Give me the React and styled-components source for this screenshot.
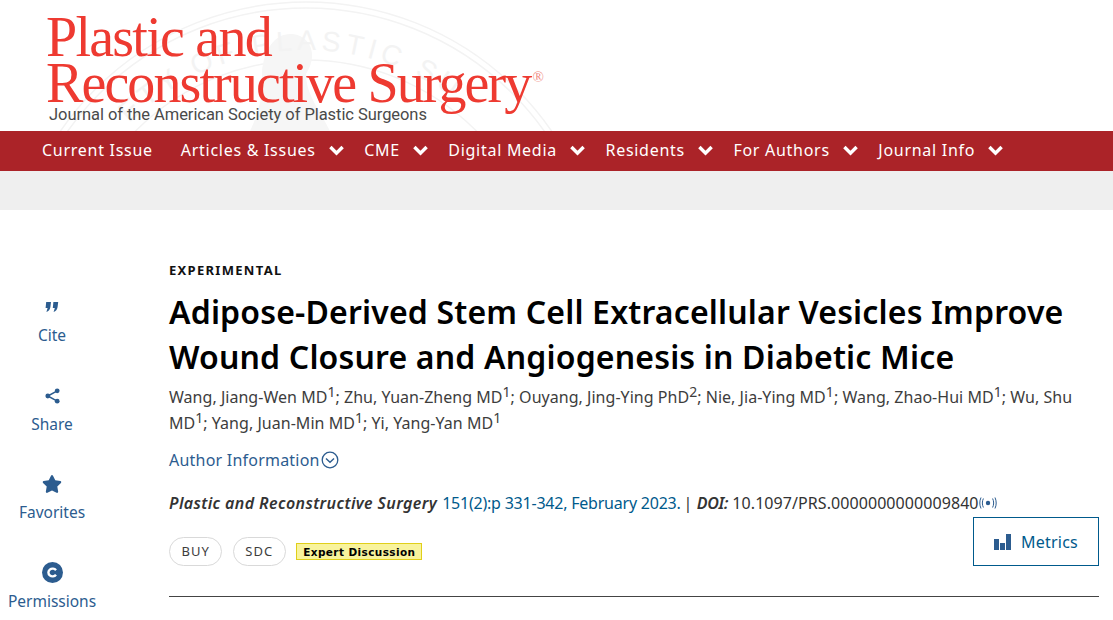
import React from "react";
import styled, { createGlobalStyle } from "styled-components";
import { FaStar } from "react-icons/fa";

const GlobalStyle = createGlobalStyle`
  html, body { margin: 0; padding: 0; background: #fff; }
  body { font-family: "Noto Sans", "Open Sans", sans-serif; color: #3d3d3d; overflow: hidden; }
  sup { font-size: 14px; line-height: 0; vertical-align: 6px; }
`;

const Page = styled.div`
  width: 1113px;
  height: 620px;
  overflow: hidden;
`;

const Header = styled.header`
  position: relative;
  height: 131px;
  padding: 14px 0 0 46px;
  box-sizing: border-box;
  overflow: hidden;
`;

const Seal = styled.svg`
  position: absolute;
  left: 0;
  top: 0;
`;

const Logo = styled.div`
  position: relative;
  font-family: "Liberation Serif", serif;
  color: #ee3a31;
`;

const LogoLine = styled.div`
  font-size: 56px;
  letter-spacing: ${({ $spacing }) => $spacing}px;
  line-height: 46px;
  white-space: nowrap;
`;

const Registered = styled.span`
  font-size: 15px;
  margin-left: 2px;
  letter-spacing: 0;
  vertical-align: 20px;
  line-height: 0;
  color: #f08a80;
`;

const Tagline = styled.div`
  font-family: "Roboto", sans-serif;
  font-size: 16.5px;
  line-height: 20px;
  color: #4a4a4a;
  margin: -1px 0 0 3px;
  letter-spacing: -0.06px;
  white-space: nowrap;
`;

const Nav = styled.nav`
  height: 40px;
  background: #ab2328;
  display: flex;
  align-items: center;
  padding: 0 0 2px 42px;
  box-sizing: border-box;
`;

const NavItem = styled.a`
  display: flex;
  align-items: center;
  gap: 13px;
  margin-right: ${({ $plain }) => ($plain ? 28 : 20.5)}px;
  color: #fff;
  font-family: "Noto Sans", sans-serif;
  font-size: 16px;
  letter-spacing: 0.72px;
  white-space: nowrap;
`;

const Band = styled.div`
  height: 39px;
  background: #efefef;
`;

const Content = styled.div`
  display: flex;
  padding-top: 51px;
`;

const Sidebar = styled.aside`
  width: 104px;
  margin-right: 65px;
  padding-top: 35px;
  display: flex;
  flex-direction: column;
  align-items: center;
  gap: 38.6px;
`;

const Action = styled.a`
  display: flex;
  flex-direction: column;
  align-items: center;
  gap: 7px;
  color: #2c5c8f;
  font-size: 15.5px;
  line-height: 21px;
`;

const ActionIcon = styled.span`
  height: 22px;
  display: flex;
  align-items: center;
  justify-content: center;
`;

const Main = styled.main`
  width: 930px;
`;

const Category = styled.div`
  font-size: 13px;
  font-weight: 700;
  line-height: 18px;
  letter-spacing: 1.3px;
  color: #111;
`;

const Title = styled.h1`
  margin: 10px 0 0;
  font-size: 32px;
  line-height: 45px;
  font-weight: 600;
  letter-spacing: 0.17px;
  color: #000;
  white-space: nowrap;
`;

const Authors = styled.p`
  margin: 5px 0 0;
  font-size: 16px;
  line-height: 26px;
  letter-spacing: 0.03px;
  color: #3d3d3d;
`;

const AuthorInfo = styled.a`
  display: flex;
  align-items: center;
  margin-top: 12px;
  gap: 1px;
  color: #2c5c8f;
  font-size: 16px;
  line-height: 24px;
  letter-spacing: 0.22px;
`;

const Citation = styled.div`
  display: flex;
  align-items: center;
  margin-top: 19px;
  font-size: 16px;
  line-height: 24px;
  white-space: nowrap;
`;

const Journal = styled.em`
  font-weight: 600;
  color: #333;
  letter-spacing: 0.38px;
`;

const Volume = styled.span`
  margin-left: 5px;
  color: #005a8c;
  letter-spacing: -0.22px;
`;

const Doi = styled.span`
  margin-left: 3px;
  color: #333;
  letter-spacing: 0.07px;
`;

const DoiLabel = styled.em`
  font-weight: 600;
  letter-spacing: -0.3px;
`;

const ActionRow = styled.div`
  display: flex;
  justify-content: space-between;
  align-items: flex-start;
  margin-top: 2px;
`;

const Tags = styled.div`
  display: flex;
  align-items: center;
  gap: 10.5px;
  margin-top: 20px;
`;

const Pill = styled.a`
  height: 29px;
  box-sizing: border-box;
  padding: 0 11.5px 1px;
  border: 1px solid #d9d9d9;
  border-radius: 15px;
  display: flex;
  align-items: center;
  font-size: 13px;
  letter-spacing: 1px;
  color: #3d3d3d;
`;

const ExpertBadge = styled.span`
  height: 17px;
  box-sizing: border-box;
  padding: 0 6px;
  background: #f8f39c;
  border: 1px solid #e0cf1a;
  display: flex;
  align-items: center;
  font-family: "DejaVu Sans", sans-serif;
  font-size: 10.5px;
  font-weight: 700;
  letter-spacing: 0.4px;
  color: #000;
`;

const MetricsButton = styled.a`
  width: 126px;
  height: 49px;
  box-sizing: border-box;
  border: 1px solid #005a8c;
  display: flex;
  align-items: center;
  justify-content: center;
  gap: 10px;
  color: #005a8c;
  font-size: 16px;
  letter-spacing: 0.2px;
`;

const Rule = styled.hr`
  margin: 30px 0 0;
  border: 0;
  border-top: 1px solid #444;
`;

const navItems = [
  { label: "Current Issue", plain: true },
  { label: "Articles & Issues" },
  { label: "CME" },
  { label: "Digital Media" },
  { label: "Residents" },
  { label: "For Authors" },
  { label: "Journal Info" },
];

const authors = [
  ["Wang, Jiang-Wen MD", 1],
  ["Zhu, Yuan-Zheng MD", 1],
  ["Ouyang, Jing-Ying PhD", 2],
  ["Nie, Jia-Ying MD", 1],
  ["Wang, Zhao-Hui MD", 1],
  ["Wu, Shu MD", 1],
  ["Yang, Juan-Min MD", 1],
  ["Yi, Yang-Yan MD", 1],
];

const SealMark = () => (
  <Seal width="620" height="131" viewBox="0 0 620 131" fill="none" stroke="#f3f3f3" strokeWidth="1.5">
    <circle cx="306" cy="300" r="298" />
    <circle cx="306" cy="300" r="292" />
    <circle cx="306" cy="300" r="240" />
    <path d="M250 131 C262 105 262 95 262 72 C264 45 280 28 300 36 C316 44 314 62 306 74 C306 95 320 110 330 131 Z" fill="#f6f6f6" stroke="none" />
    <path id="sealArc" d="M56 300 A250 250 0 0 1 556 300" stroke="none" />
    <text fontFamily="Liberation Sans, sans-serif" fontSize="28" fill="#f3f3f3" stroke="none" letterSpacing="5">
      <textPath href="#sealArc" startOffset="25%">ETY OF PLASTIC SU</textPath>
    </text>
  </Seal>
);

const NavChevron = () => (
  <svg width="15" height="11" viewBox="0 0 15 11" fill="none" stroke="#fff" strokeWidth="3.4">
    <path d="M1.4 2 L7.5 8.2 L13.6 2" />
  </svg>
);

const QuoteIcon = () => (
  <svg width="14" height="12" viewBox="0 0 14 12" fill="#2c5c8f">
    <path d="M1.2 1 H6 L5.4 6 C5 8.6 3.6 10.4 1.4 11 L2.6 7 H.6 Z" />
    <path d="M8.4 1 H13.2 L12.6 6 C12.2 8.6 10.8 10.4 8.6 11 L9.8 7 H7.8 Z" />
  </svg>
);

const ShareIcon = () => (
  <svg width="15" height="16" viewBox="0 0 15 16" fill="#2c5c8f" stroke="#2c5c8f">
    <circle cx="12.2" cy="2.8" r="2.4" stroke="none" />
    <circle cx="2.8" cy="8" r="2.4" stroke="none" />
    <circle cx="12.2" cy="13.2" r="2.4" stroke="none" />
    <path d="M12.2 2.8 L2.8 8 L12.2 13.2" fill="none" strokeWidth="1.5" />
  </svg>
);

const CopyrightIcon = () => (
  <svg width="21" height="21" viewBox="0 0 21 21">
    <circle cx="10.5" cy="10.5" r="10.5" fill="#2c5c8f" />
    <path d="M14 8.2 A4.2 3.9 0 1 0 14 12.8" fill="none" stroke="#fff" strokeWidth="2.4" />
  </svg>
);

const CircleChevron = () => (
  <svg width="18" height="18" viewBox="0 0 18 18" fill="none" stroke="#2c5c8f">
    <circle cx="9" cy="9" r="7.8" strokeWidth="1.3" />
    <path d="M5 7.5 L9 11.3 L13 7.5" strokeWidth="1.4" />
  </svg>
);

const SignalIcon = () => (
  <svg width="18" height="14" viewBox="0 0 18 14" fill="none" stroke="#2c5c8f" strokeWidth="1">
    <circle cx="9" cy="7" r="2.2" fill="#2c5c8f" stroke="none" />
    <path d="M4.4 2.5 C3 5.2 3 8.8 4.4 11.5 M2 1.5 C.4 5 .4 9 2 12.5 M13.6 2.5 C15 5.2 15 8.8 13.6 11.5 M16 1.5 C17.6 5 17.6 9 16 12.5" />
  </svg>
);

const BarsIcon = () => (
  <svg width="17" height="16" viewBox="0 0 17 16" fill="#2c5c8f">
    <rect x="0" y="5" width="5" height="11" />
    <rect x="6" y="9" width="5" height="7" />
    <rect x="12" y="0" width="5" height="16" />
  </svg>
);

const App = () => (
  <Page>
    <GlobalStyle />
    <Header>
      <SealMark />
      <Logo>
        <LogoLine $spacing={-1.75}>Plastic and</LogoLine>
        <LogoLine $spacing={-1.9}>
          Reconstructive Surgery<Registered>®</Registered>
        </LogoLine>
        <Tagline>Journal of the American Society of Plastic Surgeons</Tagline>
      </Logo>
    </Header>
    <Nav>
      {navItems.map((item) => (
        <NavItem key={item.label} $plain={item.plain}>
          {item.label}
          {!item.plain && <NavChevron />}
        </NavItem>
      ))}
    </Nav>
    <Band />
    <Content>
      <Sidebar>
        <Action>
          <ActionIcon><QuoteIcon /></ActionIcon>
          Cite
        </Action>
        <Action>
          <ActionIcon><ShareIcon /></ActionIcon>
          Share
        </Action>
        <Action>
          <ActionIcon><FaStar size={20} /></ActionIcon>
          Favorites
        </Action>
        <Action>
          <ActionIcon><CopyrightIcon /></ActionIcon>
          Permissions
        </Action>
      </Sidebar>
      <Main>
        <Category>EXPERIMENTAL</Category>
        <Title>
          Adipose-Derived Stem Cell Extracellular Vesicles Improve<br />
          Wound Closure and Angiogenesis in Diabetic Mice
        </Title>
        <Authors>
          {authors.map(([name, mark], index) => (
            <React.Fragment key={name}>
              {name}<sup>{mark}</sup>{index < authors.length - 1 && "; "}
            </React.Fragment>
          ))}
        </Authors>
        <AuthorInfo>Author Information<CircleChevron /></AuthorInfo>
        <Citation>
          <Journal>Plastic and Reconstructive Surgery</Journal>
          <Volume>151(2):p 331-342, February 2023.</Volume>
          <Doi>| <DoiLabel>DOI:</DoiLabel> 10.1097/PRS.0000000000009840</Doi>
          <SignalIcon />
        </Citation>
        <ActionRow>
          <Tags>
            <Pill>BUY</Pill>
            <Pill>SDC</Pill>
            <ExpertBadge>Expert Discussion</ExpertBadge>
          </Tags>
          <MetricsButton><BarsIcon />Metrics</MetricsButton>
        </ActionRow>
        <Rule />
      </Main>
    </Content>
  </Page>
);

export default App;
